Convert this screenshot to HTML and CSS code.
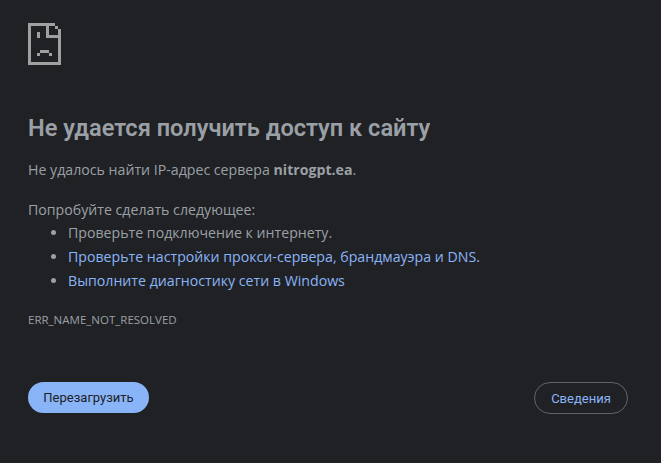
FILE: index.html
```html
<!DOCTYPE html>
<html lang="ru">
<head>
<meta charset="utf-8">
<title>nitrogpt.ea</title>
<link rel="stylesheet" href="styles.css">
</head>
<body>
<main class="page">
  <svg class="icon" width="33" height="42" viewBox="0 0 11 14" shape-rendering="crispEdges" aria-hidden="true">
    <path class="icon-shape" d="M0 0H9V1H7V4H10V2H11V14H0ZM1 1V13H10V5H6V1ZM9 1H10V2H9ZM3 3H4V5H3ZM4 9H7V10H4ZM3 10H4V11H3ZM7 10H8V11H7Z" fill-rule="evenodd"/>
  </svg>
  <h1 class="title">Не удается получить доступ к сайту</h1>
  <p class="summary">Не удалось найти IP-адрес сервера <strong>nitrogpt.ea</strong>.</p>
  <div class="suggestions">
    <p class="lead">Попробуйте сделать следующее:</p>
    <ul class="list">
      <li>Проверьте подключение к интернету.</li>
      <li><a href="#">Проверьте настройки прокси-сервера, брандмауэра и DNS.</a></li>
      <li><a href="#">Выполните диагностику сети в Windows</a></li>
    </ul>
  </div>
  <div class="code">ERR_NAME_NOT_RESOLVED</div>
  <div class="actions">
    <button class="btn btn-primary" type="button">Перезагрузить</button>
    <button class="btn btn-secondary" type="button">Сведения</button>
  </div>
</main>
</body>
</html>
```
FILE: styles.css
```css
* { box-sizing: border-box; }
html, body { margin: 0; height: 100%; }
body {
  background: #202124;
  color: #9aa0a6;
  font-family: "Open Sans", "Noto Sans", sans-serif;
  font-size: 14.17px;
  overflow: hidden;
}
.page {
  display: flex;
  flex-direction: column;
  padding: 23px 33px 0 28px;
}
.icon { display: block; }
.icon-shape { fill: #a0a0a0; }
.title {
  margin: 47px 0 0;
  font-family: Roboto, sans-serif;
  font-size: 23.6px;
  line-height: 32px;
  font-weight: 600;
  color: #9aa0a6;
}
.summary { margin: 14px 0 0; line-height: 24px; }
.summary strong { font-weight: 700; }
.suggestions { margin-top: 16px; }
.lead { margin: 0; line-height: 24px; }
.list { margin: -1px 0 0; padding: 0 0 0 40px; }
.list li { line-height: 24px; }
.list a { color: #8ab4f8; text-decoration: none; }
.code { margin-top: 19px; font-size: 11.5px; line-height: 16px; text-transform: uppercase; }
.actions {
  display: flex;
  justify-content: space-between;
  align-items: flex-start;
  margin-top: 54px;
}
.btn {
  height: 32px;
  border-radius: 16px;
  font-family: Roboto, sans-serif;
  font-size: 13px;
  font-weight: 400;
  padding: 0;
}
.btn-primary { width: 121px; background: #8ab4f8; border: 0; color: #202124; height: 31px; }
.btn-secondary { width: 94px; background: transparent; border: 1px solid #5f6368; color: #8ab4f8; }
```
